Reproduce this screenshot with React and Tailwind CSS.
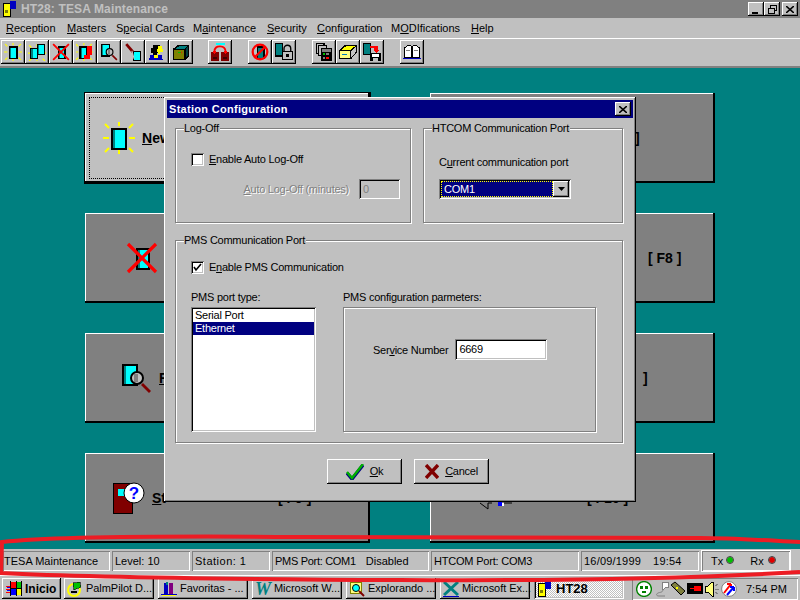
import React from "react";

const raised = "shadow-[inset_-1px_-1px_0_#000,inset_1px_1px_0_#fff,inset_-2px_-2px_0_#808080]";
const sunken = "shadow-[inset_1px_1px_0_#808080,inset_-1px_-1px_0_#fff,inset_2px_2px_0_#000,inset_-2px_-2px_0_#c0c0c0]";
const etched = "border border-[#808080] shadow-[1px_1px_0_#fff,inset_1px_1px_0_#fff]";
const thin = "shadow-[inset_1px_1px_0_#808080,inset_-1px_-1px_0_#fff]";

function Svg({ size = 16, children, box = "0 0 16 16" }) {
  return (
    <svg width={size} height={size} viewBox={box} shapeRendering="crispEdges" className="block shrink-0">
      {children}
    </svg>
  );
}

function Door({ x = 5, y = 3, w = 7, h = 11, fill = "#00ffff" }) {
  return (
    <g>
      <rect x={x} y={y} width={w} height={h} fill="#000" />
      <rect x={x + 1} y={y + 1} width={1} height={h - 2} fill="#008080" />
      <rect x={x + 2} y={y + 1} width={w - 3} height={h - 2} fill={fill} />
    </g>
  );
}

function Rays({ cx = 8, cy = 8 }) {
  return (
    <g stroke="#ffff00" strokeWidth="1" fill="none" shapeRendering="auto">
      <path d={`M${cx} ${cy - 8}v2M${cx} ${cy + 6}v2M${cx - 8} ${cy}h3M${cx + 5} ${cy}h3M${cx - 7} ${cy - 7}l2 2M${cx + 7} ${cy - 7}l-2 2M${cx - 7} ${cy + 7}l2 -2M${cx + 7} ${cy + 7}l-2 -2`} />
    </g>
  );
}

const NewDoor = ({ size }) => (
  <Svg size={size}>
    <Rays />
    <Door x={4} y={3} w={8} h={11} />
  </Svg>
);

const TwoDoors = ({ size }) => (
  <Svg size={size}>
    <Rays cx={8} cy={9} />
    <Door x={2} y={4} w={7} h={10} />
    <Door x={8} y={1} w={7} h={10} />
  </Svg>
);

const CrossDoor = ({ size }) => (
  <Svg size={size}>
    <Door x={5} y={3} w={7} h={11} />
    <path d="M1 1L15 15M15 1L1 15" stroke="#ff0000" strokeWidth="1.6" shapeRendering="auto" />
  </Svg>
);

const RedDoor = ({ size }) => (
  <Svg size={size}>
    <Rays cx={7} cy={8} />
    <Door x={3} y={3} w={7} h={11} />
    <path d="M10 3h4v8h-2v3h-5v-3h3z" fill="#ff0000" />
  </Svg>
);

const SearchDoor = ({ size }) => (
  <Svg size={size}>
    <Door x={1} y={1} w={8} h={11} />
    <path d="M11 11L15 15" stroke="#800000" strokeWidth="1.4" shapeRendering="auto" />
    <circle cx="8.5" cy="8" r="3" fill="#c0c0c0" stroke="#000" strokeWidth="1" shapeRendering="auto" />
    <rect x="7" y="6" width="2" height="4" fill="#808080" />
  </Svg>
);

const Brush = ({ size }) => (
  <Svg size={size}>
    <rect x="8" y="7" width="7" height="9" fill="#000" />
    <rect x="9" y="8" width="5" height="7" fill="#00ffff" />
    <path d="M2 1L8 8" stroke="#800000" strokeWidth="2.4" shapeRendering="auto" />
    <path d="M7 7L9 14" stroke="#c0c0c0" strokeWidth="1" shapeRendering="auto" />
  </Svg>
);

const Person = ({ size }) => (
  <Svg size={size}>
    <path d="M4 2h7v2h-2v5h-1v2h-4v-2h-1v-5h1z" fill="#000" />
    <path d="M9 3h3v2h1v3h-2v2h-2v-2h-1v-3h1z" fill="#ffff00" />
    <path d="M2 11h10l1 4h-12z" fill="#0000c0" />
    <rect x="5" y="11" width="4" height="2" fill="#ffff00" />
  </Svg>
);

const Cube = ({ size }) => (
  <Svg size={size}>
    <path d="M1 5l4 -3h10v10l-3 3h-11z" fill="#000" />
    <path d="M2 6h9v8h-9z" fill="#808000" />
    <path d="M12 5l2 -2v8l-2 3z" fill="#004040" />
    <path d="M3 5l3 -2h7l-2 2z" fill="#008080" />
    <rect x="5" y="8" width="4" height="1" fill="#00c000" />
    <rect x="8" y="8" width="1" height="1" fill="#ff0000" />
  </Svg>
);

const Swap = ({ size }) => (
  <Svg size={size}>
    <rect x="4" y="0" width="8" height="2" fill="#00ffff" />
    <rect x="0" y="8" width="7" height="8" fill="#800000" />
    <rect x="9" y="8" width="7" height="8" fill="#800000" />
    <rect x="2" y="12" width="3" height="2" fill="#400000" />
    <rect x="11" y="12" width="3" height="2" fill="#400000" />
    <path d="M3 8c0 -4 2 -5 5 -5s5 1 5 5" stroke="#ff0000" strokeWidth="1.6" fill="none" shapeRendering="auto" />
    <path d="M1 7h4l-2 3zM11 7h4l-2 3z" fill="#ff0000" />
  </Svg>
);

const NoDoor = ({ size }) => (
  <Svg size={size}>
    <Door x={5} y={3} w={7} h={11} fill="#008080" />
    <circle cx="8" cy="8" r="6.5" fill="none" stroke="#ff0000" strokeWidth="2" shapeRendering="auto" />
    <path d="M12.5 3.5L3.5 12.5" stroke="#ff0000" strokeWidth="2" shapeRendering="auto" />
  </Svg>
);

const LockDoor = ({ size }) => (
  <Svg size={size}>
    <Door x={0} y={0} w={7} h={12} fill="#008080" />
    <path d="M8 7v-2a3 3 0 0 1 6 0v2" stroke="#000" fill="none" strokeWidth="1.2" shapeRendering="auto" />
    <rect x="6" y="7" width="10" height="8" fill="#000" />
    <rect x="7" y="8" width="8" height="6" fill="#c0c0c0" />
    <rect x="10" y="10" width="2" height="2" fill="#000" />
  </Svg>
);

const Calc = ({ size }) => (
  <Svg size={size}>
    <rect x="1" y="0" width="7" height="9" fill="#c0c0c0" stroke="#000" strokeWidth="1" />
    <rect x="3" y="2" width="7" height="9" fill="#c0c0c0" stroke="#000" strokeWidth="1" />
    <rect x="5" y="4" width="10" height="12" fill="#000" />
    <rect x="6" y="5" width="8" height="3" fill="#808080" />
    <rect x="7" y="9" width="2" height="2" fill="#00c000" />
    <rect x="10" y="9" width="2" height="2" fill="#808080" />
    <rect x="7" y="12" width="2" height="2" fill="#808080" />
    <rect x="10" y="12" width="2" height="2" fill="#ff0000" />
  </Svg>
);

const YellowBox = ({ size }) => (
  <Svg size={size}>
    <path d="M0 7l5 -5h11v6l-5 6h-11z" fill="#000" />
    <path d="M1 7h9v6h-9z" fill="#ffff80" />
    <path d="M2 6l4 -3h8l-4 3z" fill="#ffff00" />
    <path d="M11 7l4 -4v5l-4 5z" fill="#c0c0c0" />
    <rect x="3" y="10" width="4" height="1" fill="#0080c0" />
  </Svg>
);

const SaveDoor = ({ size }) => (
  <Svg size={size}>
    <rect x="0" y="0" width="7" height="11" fill="#000" />
    <rect x="1" y="1" width="5" height="9" fill="#008080" />
    <rect x="6" y="3" width="6" height="1" fill="#ff0000" />
    <path d="M10 3h3v3h2l-3 3l-3 -3h1z" fill="#ff0000" />
    <rect x="6" y="9" width="10" height="7" fill="#000" />
    <rect x="8" y="10" width="6" height="2" fill="#fff" />
    <rect x="9" y="13" width="4" height="3" fill="#c0c0c0" />
  </Svg>
);

const Book = ({ size }) => (
  <Svg size={size}>
    <path d="M1 4l3 -2h3l1 1l1 -1h3l3 2v9h-14z" fill="#000" />
    <path d="M2 5l2 -2h3v9h-5zM9 3h3l2 2v7h-5z" fill="#fff" />
    <rect x="0" y="13" width="16" height="1" fill="#0000c0" />
    <rect x="3" y="6" width="3" height="1" fill="#808080" />
    <rect x="10" y="6" width="3" height="1" fill="#808080" />
  </Svg>
);

const Question = ({ size }) => (
  <svg width={size} height={size} viewBox="0 0 32 32" className="block shrink-0">
    <rect x="0.5" y="1.5" width="19" height="30" fill="#800000" stroke="#000" />
    <rect x="5" y="7" width="7" height="7" fill="#00ffff" />
    <circle cx="21" cy="11" r="10" fill="#fff" stroke="#000" />
    <text x="21" y="17" textAnchor="middle" fontSize="17" fontWeight="700" fontFamily="Liberation Sans" fill="#0000ff">?</text>
  </svg>
);

const Speaker = ({ size }) => (
  <svg width={size} height={size} viewBox="0 0 32 32" className="block shrink-0">
    <path d="M0 21l8 6v-6M8 21h4" fill="none" stroke="#000" />
    <rect x="18" y="20" width="4" height="4" fill="#0000ff" />
    <rect x="22" y="21" width="2" height="3" fill="#fff" />
    <path d="M24 21h8" stroke="#000" />
  </svg>
);

const AppIcon = ({ size = 16 }) => (
  <Svg size={size}>
    <rect x="1" y="2" width="8" height="14" fill="#000" />
    <rect x="2" y="3" width="6" height="12" fill="#ffff00" />
    <rect x="3" y="9" width="3" height="3" fill="#808000" />
    <rect x="8" y="0" width="6" height="8" fill="#0000c0" />
  </Svg>
);

const WinFlag = () => (
  <Svg size={16}>
    <rect x="5" y="1" width="5" height="6" fill="#ff0000" />
    <rect x="10" y="1" width="5" height="6" fill="#00c000" />
    <rect x="5" y="8" width="5" height="6" fill="#0000ff" />
    <rect x="10" y="8" width="5" height="6" fill="#ffff00" />
    <path d="M4 0h1v15h-1zM10 0h1v15h-1zM4 7h12v1h-12zM15 0h1v15h-1z" fill="#000" />
    <path d="M0 5h4v1h-4zM0 8h4v1h-4zM0 11h4v1h-4z" fill="#ff0000" />
    <path d="M1 6h3v1h-3zM1 9h3v1h-3z" fill="#0000ff" />
  </Svg>
);

const PalmIcon = () => (
  <Svg size={16}>
    <circle cx="7" cy="9" r="6" fill="#c0c0c0" stroke="#ffff00" strokeWidth="2" shapeRendering="auto" />
    <path d="M6 2l7 -1l1 5l-7 3z" fill="#00c000" stroke="#000" strokeWidth="0.6" />
    <rect x="4" y="10" width="6" height="2" fill="#000" />
  </Svg>
);

const FavIcon = () => (
  <Svg size={16}>
    <rect x="3" y="2" width="4" height="11" fill="#0000c0" />
    <rect x="8" y="2" width="4" height="11" fill="#800080" />
    <rect x="0" y="13" width="16" height="1" fill="#0000c0" />
    <rect x="1" y="14" width="14" height="1" fill="#ffff00" />
    <rect x="5" y="1" width="2" height="3" fill="#008080" />
  </Svg>
);

const ExplorerIcon = () => (
  <Svg size={16}>
    <rect x="1" y="1" width="11" height="11" fill="#ffff80" stroke="#808000" strokeWidth="1" />
    <circle cx="7" cy="7" r="3.5" fill="#00ffff" stroke="#000" strokeWidth="1" shapeRendering="auto" />
    <path d="M10 10L15 15" stroke="#800000" strokeWidth="2" shapeRendering="auto" />
  </Svg>
);

const ExcelIcon = () => (
  <Svg size={16}>
    <path d="M1 1L15 14M15 1L1 14" stroke="#008080" strokeWidth="3" shapeRendering="auto" />
    <path d="M0 15h16" stroke="#0000c0" strokeWidth="1" />
  </Svg>
);

const Check = () => (
  <svg width="18" height="16" viewBox="0 0 18 16" className="block shrink-0">
    <path d="M1 9l5 6L17 1" fill="none" stroke="#000080" strokeWidth="3.4" />
    <path d="M1 8l5 6L17 0" fill="none" stroke="#00b000" strokeWidth="2.4" />
  </svg>
);

const CrossRed = () => (
  <svg width="14" height="15" viewBox="0 0 14 15" className="block shrink-0">
    <path d="M1 1L13 14M13 1L1 14" stroke="#800000" strokeWidth="3.4" />
  </svg>
);

const TrayIcons = () => (
  <div className="flex items-center gap-[1px]">
    <Svg size={16}>
      <circle cx="8" cy="8" r="7.4" fill="#fff" stroke="#008000" strokeWidth="1.4" shapeRendering="auto" />
      <rect x="4" y="5" width="3" height="3" fill="#008000" />
      <rect x="9" y="5" width="3" height="3" fill="#008000" />
      <rect x="6" y="10" width="4" height="2" fill="#008000" />
    </Svg>
    <Svg size={16}>
      <path d="M9 1h6v5h-2l-2 2h-2z" fill="#fff" stroke="#808080" strokeWidth="1" />
      <path d="M10 8c0 4 -3 3 -5 4s-2 3 1 3h6" fill="none" stroke="#808080" strokeWidth="1" shapeRendering="auto" />
    </Svg>
    <Svg size={16}>
      <path d="M1 4l4 -3l10 9l-4 4z" fill="#808040" stroke="#000" strokeWidth="1" shapeRendering="auto" />
      <rect x="6" y="6" width="2" height="2" fill="#ffff00" />
    </Svg>
    <Svg size={16}>
      <rect x="0" y="2" width="16" height="11" fill="#000" />
      <path d="M3 7h4v-2h7v5h-7v-2h-4z" fill="#ff0000" />
    </Svg>
    <Svg size={16}>
      <path d="M1 5h3l4 -4h1v14h-1l-4 -4h-3z" fill="#ffff80" stroke="#000" strokeWidth="1" />
      <path d="M11 5l3 -2M11 8h4M11 11l3 2" stroke="#808080" strokeWidth="1" />
    </Svg>
    <Svg size={16}>
      <circle cx="8" cy="8" r="7.4" fill="#fff" stroke="#808080" strokeWidth="1" shapeRendering="auto" />
      <path d="M3 12L10 3M10 3v4M10 3h-4" stroke="#ff0000" strokeWidth="2" fill="none" shapeRendering="auto" />
      <path d="M6 14L13 6M13 6v4M13 6h-4" stroke="#0000ff" strokeWidth="2" fill="none" shapeRendering="auto" />
    </Svg>
  </div>
);

const toolbarGroups = [
  { cls: "ml-[1px]", items: [NewDoor, TwoDoors, CrossDoor, RedDoor, SearchDoor, Brush, Person, Cube] },
  { cls: "ml-[15px]", items: [Swap] },
  { cls: "ml-[16px]", items: [NoDoor, LockDoor] },
  { cls: "ml-[16px]", items: [Calc, YellowBox, SaveDoor] },
  { cls: "ml-[16px]", items: [Book] },
];

const menus = [
  ["", "R", "eception", "w-[61px]"],
  ["", "M", "asters", "w-[49px]"],
  ["S", "p", "ecial Cards", "w-[77px]"],
  ["M", "a", "intenance", "w-[74px]"],
  ["", "S", "ecurity", "w-[50px]"],
  ["", "C", "onfiguration", "w-[74px]"],
  ["M", "O", "DIfications", "w-[80px]"],
  ["", "H", "elp", "w-[30px]"],
];

const mainButtons = [
  { icon: <NewDoor size={32} />, label: "N", rest: "ew", pad: "pl-[18px]", active: true },
  { key_: "]", pad: "pl-[205px]", keyOnly: true },
  { icon: <CrossDoor size={32} />, pad: "pl-[41px]" },
  { key_: "[ F8 ]", pad: "pl-[218px]", keyOnly: true },
  { icon: <SearchDoor size={32} />, label: "F", pad: "pl-[35px]" },
  { key_: "]", pad: "pl-[213px]", keyOnly: true },
  { icon: <Question size={32} />, label: "S", rest: "t", key_: "[ F9 ]", pad: "pl-[28px]" },
  { icon: <Speaker size={32} />, key_: "[ F10 ]", pad: "pl-[50px]", wide: true },
];

function MainButton({ b }) {
  const face = b.active
    ? "bg-[#c0c0c0] shadow-[inset_-2px_-2px_0_#000,inset_1px_1px_0_#fff,0_0_0_1px_#000]"
    : "bg-[#808080] shadow-[inset_-2px_-2px_0_#000,inset_1px_1px_0_#fff]";
  const keyPos = b.keyOnly ? "" : b.wide ? "ml-[75px]" : "ml-[112px]";
  return (
    <div className={`relative h-[90px] flex items-center ${b.pad} ${face}`}>
      {b.active && <div className="absolute inset-[4px] border border-dotted border-black" />}
      {b.icon}
      {b.label && (
        <span className="ml-[7px] text-[14px] font-bold text-black">
          <u>{b.label}</u>
          {b.rest}
        </span>
      )}
      {b.key_ && <span className={`${keyPos} text-[14px] font-bold text-black`}>{b.key_}</span>}
    </div>
  );
}

function Group({ title, className, children }) {
  return (
    <div className={`relative ${etched} ${className}`}>
      <span className="absolute left-[8px] top-[-7px] bg-[#c0c0c0] pr-[1px] leading-[13px]">{title}</span>
      {children}
    </div>
  );
}

function CheckBox({ checked }) {
  return (
    <span className={`w-[13px] h-[13px] bg-white flex items-center justify-center ${sunken}`}>
      {checked && (
        <svg width="9" height="9" viewBox="0 0 9 9">
          <path d="M1 4l2 3l5 -6" fill="none" stroke="#000" strokeWidth="1.6" />
        </svg>
      )}
    </span>
  );
}

function DialogButton({ icon, children }) {
  return (
    <div className={`w-[75px] h-[25px] bg-[#c0c0c0] flex items-center justify-center gap-[6px] ${raised}`}>
      {icon}
      <span>{children}</span>
    </div>
  );
}

function Dialog() {
  return (
    <div className={`absolute left-[164px] top-[97px] w-[472px] h-[405px] bg-[#c0c0c0] p-[3px] flex flex-col tracking-[-0.25px] ${raised}`}>
      <div className="h-[18px] bg-[#000080] flex items-center justify-between pl-[2px] pr-[2px] text-white font-bold text-[11px] tracking-[0.3px]">
        Station Configuration
        <span className={`w-[16px] h-[14px] bg-[#c0c0c0] flex items-center justify-center ${raised}`}>
          <svg width="8" height="7" viewBox="0 0 8 7">
            <path d="M0 0L8 7M8 0L0 7" stroke="#000" strokeWidth="1.6" />
          </svg>
        </span>
      </div>

      <div className="flex gap-[12px] mt-[10px] ml-[8px]">
        <Group title="Log-Off" className="w-[236px] h-[95px] pl-[15px] pt-[24px]">
          <div className="flex items-center gap-[5px] h-[13px]">
            <CheckBox />
            <span><u>E</u>nable Auto Log-Off</span>
          </div>
          <div className="flex items-center justify-end gap-[10px] mt-[13px] pr-[10px]">
            <span className="text-[#808080] [text-shadow:1px_1px_0_#fff]"><u>A</u>uto Log-Off (minutes)</span>
            <span className={`w-[41px] h-[20px] flex items-center pl-[4px] text-[#808080] ${sunken}`}>0</span>
          </div>
        </Group>
        <Group title="HTCOM Communication Port" className="w-[200px] h-[95px] pl-[15px] pt-[25px]">
          <div className="leading-[16px]">C<u>u</u>rrent communication port</div>
          <div className={`mt-[9px] w-[132px] h-[20px] bg-white flex items-center p-[2px] ${sunken}`}>
            <span className="flex-1 h-[16px] bg-[#000080] text-white border border-dotted border-[#ffff00] leading-[14px] pl-[2px]">COM1</span>
            <span className={`w-[16px] h-[16px] bg-[#c0c0c0] flex items-center justify-center ${raised}`}>
              <svg width="7" height="4" viewBox="0 0 7 4"><path d="M0 0h7L3.5 4z" fill="#000" /></svg>
            </span>
          </div>
        </Group>
      </div>

      <Group title="PMS Communication Port" className="w-[448px] h-[203px] mt-[17px] ml-[8px] pl-[15px] pt-[20px]">
        <div className="flex items-center gap-[5px] h-[13px]">
          <CheckBox checked />
          <span>E<u>n</u>able PMS Communication</span>
        </div>
        <div className="flex gap-[27px] mt-[17px]">
          <div className="w-[125px]">
            <div className="leading-[13px] mb-[3px]">PMS port type:</div>
            <div className={`h-[125px] bg-white p-[2px] ${sunken}`}>
              <div className="h-[13px] leading-[13px] pl-[2px] text-black">Serial Port</div>
              <div className="h-[13px] leading-[13px] pl-[2px] bg-[#000080] text-white">Ethernet</div>
            </div>
          </div>
          <div className="w-[253px]">
            <div className="leading-[13px] mb-[3px]">PMS configuration parmeters:</div>
            <div className={`h-[125px] flex items-start pl-[29px] pt-[31px] gap-[7px] ${etched}`}>
              <span className="leading-[22px]">Ser<u>v</u>ice Number</span>
              <span className={`w-[92px] h-[21px] bg-white flex items-center pl-[4px] ${sunken}`}>6669</span>
            </div>
          </div>
        </div>
      </Group>

      <div className="flex gap-[12px] mt-[16px] ml-[160px]">
        <DialogButton icon={<Check />}><u>O</u>k</DialogButton>
        <DialogButton icon={<CrossRed />}><u>C</u>ancel</DialogButton>
      </div>
    </div>
  );
}

const taskItems = [
  { icon: <PalmIcon />, text: "PalmPilot D..." },
  { icon: <FavIcon />, text: "Favoritas - ..." },
  { icon: <span className="w-[16px] font-['Liberation_Serif'] italic font-bold text-[18px] leading-[16px] text-[#008080]">W</span>, text: "Microsoft W..." },
  { icon: <ExplorerIcon />, text: "Explorando ..." },
  { icon: <ExcelIcon />, text: "Microsoft Ex..." },
];

export default function App() {
  return (
    <div className="relative w-[800px] h-[600px] overflow-hidden flex flex-col bg-[#c0c0c0] text-black text-[11px] font-['Liberation_Sans',Arial,sans-serif]">
      {/* title bar */}
      <div className="h-[18px] bg-[#808080] flex items-center pl-[2px] pr-[2px]">
        <AppIcon />
        <span className="ml-[3px] font-bold text-[#c0c0c0] text-[12px] tracking-[0.13px]">HT28: TESA Maintenance</span>
        <div className="ml-auto flex">
          {["min", "max"].map((k) => (
            <span key={k} className={`w-[16px] h-[14px] bg-[#c0c0c0] flex items-center justify-center ${raised}`}>
              {k === "min" ? (
                <span className="mt-[7px] mr-[2px] w-[6px] h-[2px] bg-black" />
              ) : (
                <svg width="9" height="9" viewBox="0 0 9 9" shapeRendering="crispEdges">
                  <path d="M2.5 2.5v-2h6v5h-2M0.5 3.5h6v5h-6z" fill="none" stroke="#000" />
                </svg>
              )}
            </span>
          ))}
          <span className={`ml-[2px] w-[16px] h-[14px] bg-[#c0c0c0] flex items-center justify-center ${raised}`}>
            <svg width="8" height="7" viewBox="0 0 8 7"><path d="M0 0L8 7M8 0L0 7" stroke="#000" strokeWidth="1.6" /></svg>
          </span>
        </div>
      </div>

      {/* menu */}
      <div className="h-[20px] flex items-center pl-[6px] text-[11px] border-b border-white box-content">
        {menus.map(([pre, u, rest, w]) => (
          <span key={rest} className={`${w} shrink-0`}>{pre}<u>{u}</u>{rest}</span>
        ))}
      </div>

      {/* toolbar */}
      <div className="h-[29px] flex items-start pt-[1px] border-b-2 border-[#808080]">
        {toolbarGroups.map((g, i) => (
          <div key={i} className={`flex ${g.cls}`}>
            {g.items.map((Icon, j) => (
              <div key={j} className={`w-[24px] h-[24px] flex items-center justify-center ${raised}`}>
                <Icon size={18} />
              </div>
            ))}
          </div>
        ))}
      </div>

      {/* main */}
      <div className="flex-1 bg-[#008080] pl-[85px] pt-[25px]">
        <div className="grid grid-cols-[285px_285px] gap-x-[60px] gap-y-[30px]">
          {mainButtons.map((b, i) => (
            <MainButton key={i} b={b} />
          ))}
        </div>
      </div>

      {/* status */}
      <div className="h-[26px] shrink-0 flex items-start pt-[2px] gap-[2px] pl-[3px]">
        <div className={`w-[107px] h-[20px] flex items-center pl-[1px] ${thin}`}>TESA Maintenance</div>
        <div className={`w-[78px] h-[20px] flex items-center pl-[3px] ${thin}`}>Level: 10</div>
        <div className={`w-[78px] h-[20px] flex items-center pl-[3px] tracking-[0.5px] ${thin}`}>Station: 1</div>
        <div className={`w-[157px] h-[20px] flex items-center pl-[3px] gap-[10px] ${thin}`}><span className="tracking-[-0.3px]">PMS Port: COM1</span><span>Disabled</span></div>
        <div className={`w-[148px] h-[20px] flex items-center pl-[3px] tracking-[-0.2px] ${thin}`}>HTCOM Port: COM3</div>
        <div className={`w-[118px] h-[20px] flex items-center pl-[3px] gap-[12px] tracking-[0.2px] ${thin}`}><span>16/09/1999</span><span>19:54</span></div>
        <div className={`ml-[1px] w-[88px] h-[20px] flex items-center pl-[9px] ${thin} outline outline-1 outline-white`}>
          <span>Tx</span>
          <span className="ml-[4px] mb-[3px] w-[6px] h-[6px] rounded-full bg-[#00c000] outline outline-1 outline-[#404040]" />
          <span className="ml-[17px]">Rx</span>
          <span className="ml-[5px] mb-[3px] w-[6px] h-[6px] rounded-full bg-[#e00000] outline outline-1 outline-[#404040]" />
        </div>
      </div>

      {/* taskbar */}
      <div className="h-[25px] shrink-0 border-t border-white flex items-start pt-[2px] pl-[2px]">
        <div className={`w-[59px] h-[21px] flex items-center pl-[4px] gap-[3px] font-bold text-[12px] ${raised}`}>
          <WinFlag />
          Inicio
        </div>
        <div className="flex gap-[4px] ml-[3px]">
          {taskItems.map((t) => (
            <div key={t.text} className={`w-[90px] h-[21px] flex items-center pl-[3px] gap-[3px] whitespace-nowrap tracking-[-0.05px] ${raised}`}>
              {t.icon}
              <span>{t.text}</span>
            </div>
          ))}
          <div className={`w-[90px] h-[21px] flex items-center pl-[3px] gap-[3px] font-bold text-[13px] bg-[repeating-conic-gradient(#fff_0_25%,#c0c0c0_0_50%)] bg-[length:2px_2px] ${sunken}`}>
            <AppIcon />
            HT28
          </div>
        </div>
        <div className={`ml-[8px] w-[166px] h-[22px] flex items-center pl-[4px] ${thin}`}>
          <TrayIcons />
          <span className="ml-[9px]">7:54 PM</span>
        </div>
      </div>

      <Dialog />

      {/* hand-drawn red marker */}
      <svg width="800" height="600" viewBox="0 0 800 600" className="absolute inset-0 pointer-events-none">
        <path
          d="M800 542C760 540 730 538 700 538L300 537C180 536 60 536 2 542L1 573C80 577 200 579 400 580C560 581 680 579 800 572"
          fill="none"
          stroke="#ed1c24"
          strokeWidth="4"
        />
      </svg>
    </div>
  );
}
